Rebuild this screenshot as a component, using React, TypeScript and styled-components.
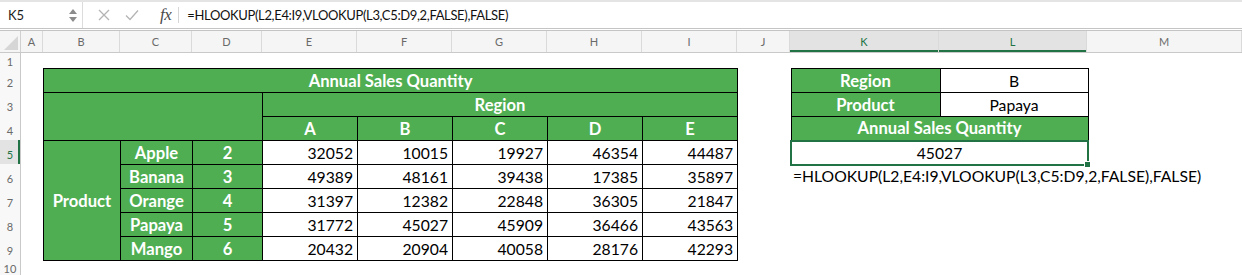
import React from "react";
import styled, { createGlobalStyle } from "styled-components";

const GREEN = "#4FAE52";
const SEL = "#217346";
const CELL_FONT = `"Lato", "Open Sans", sans-serif`;
const UI_FONT = `"Lato", "Liberation Sans", sans-serif`;

const Global = createGlobalStyle`
  html, body { margin: 0; padding: 0; background: #fff; overflow: hidden; }
  #root { width: 1242px; height: 275px; overflow: hidden; }
`;

const Page = styled.div`
  width: 1242px;
  height: 275px;
  display: flex;
  flex-direction: column;
  font-family: ${UI_FONT};
  background: #fff;
`;

/* ---------- formula bar ---------- */
const FormulaBar = styled.div`
  height: 26px;
  flex: 0 0 26px;
  border-top: 2px solid #e4e4e4;
  border-bottom: 3px double #c4c4c4;
  display: flex;
  align-items: center;
  background: #fff;
`;

const NameBox = styled.div`
  width: 83px;
  height: 100%;
  box-sizing: border-box;
  border-right: 1px solid #dcdcdc;
  display: flex;
  align-items: center;
  justify-content: space-between;
  padding: 0 5px 0 8px;
  font-size: 13px;
  color: #1d1d1d;
`;

const Spinner = styled.div`
  display: flex;
  flex-direction: column;
  gap: 3px;
`;

const IconButton = styled.div<{ $ml: number }>`
  margin-left: ${(p) => p.$ml}px;
  display: flex;
  align-items: center;
  justify-content: center;
  width: 14px;
  height: 14px;
`;

const Fx = styled.span`
  margin-left: 21px;
  font-family: "Liberation Serif", "DejaVu Serif", serif;
  font-style: italic;
  font-size: 17px;
  color: #4a4a4a;
  letter-spacing: -0.5px;
`;

const BarDivider = styled.div`
  width: 1px;
  height: 16px;
  background: #d6d6d6;
  margin-left: 7px;
`;

const FormulaText = styled.div`
  margin-left: 8px;
  font-size: 13px;
  letter-spacing: -0.35px;
  color: #111;
  white-space: nowrap;
`;

/* ---------- column headers ---------- */
const ColHeaderRow = styled.div`
  height: 21px;
  flex: 0 0 21px;
  display: flex;
  background: #f5f5f5;
  border-bottom: 1px solid #c9c9c9;
`;

const ColHeader = styled.div<{ $w: number; $active?: boolean }>`
  flex: ${(p) => (p.$w ? `0 0 ${p.$w}px` : "1 1 auto")};
  box-sizing: border-box;
  border-right: 1px solid #dadada;
  display: flex;
  align-items: center;
  justify-content: center;
  font-size: 11px;
  color: ${(p) => (p.$active ? SEL : "#6a6a6a")};
  background: ${(p) => (p.$active ? "#e3e3e3" : "transparent")};
  box-shadow: ${(p) => (p.$active ? `inset 0 -2px 0 ${SEL}` : "none")};
  position: relative;
`;

const Corner = styled.div`
  flex: 0 0 21px;
  box-sizing: border-box;
  border-right: 1px solid #d0d0d0;
  display: flex;
  align-items: flex-end;
  justify-content: flex-end;
  padding: 0 2px 2px 0;
`;

/* ---------- body ---------- */
const Body = styled.div`
  flex: 1;
  display: flex;
  min-height: 0;
`;

const RowHeaders = styled.div`
  flex: 0 0 21px;
  box-sizing: border-box;
  border-right: 1px solid #c9c9c9;
  background: #f8f8f8;
  display: flex;
  flex-direction: column;
`;

const RowHeader = styled.div<{ $h: number; $active?: boolean }>`
  flex: ${(p) => (p.$h ? `0 0 ${p.$h}px` : "1 1 auto")};
  display: flex;
  align-items: flex-end;
  justify-content: center;
  padding-bottom: ${(p) => (p.$h > 20 ? 3 : 0)}px;
  box-sizing: border-box;
  font-size: 11px;
  color: ${(p) => (p.$active ? SEL : "#6a6a6a")};
  background: ${(p) => (p.$active ? "#e3e3e3" : "transparent")};
  box-shadow: ${(p) => (p.$active ? `inset -2px 0 0 ${SEL}` : "none")};
`;

const Canvas = styled.div`
  flex: 1;
  display: grid;
  grid-template-columns: 22px 77px 72px 70px repeat(5, 95px) 53px 149px 148px 1fr;
  grid-template-rows: 15px repeat(8, 24px) 1fr;
`;

const TableArea = styled.div<{ $col: string; $row: string }>`
  grid-column: ${(p) => p.$col};
  grid-row: ${(p) => p.$row};
`;

const Table = styled.table`
  border-collapse: collapse;
  table-layout: fixed;
  width: 100%;
  height: 100%;
  font-family: ${CELL_FONT};
`;

const Tr = styled.tr`
  height: 24px;
`;

const Td = styled.td<{ $green?: boolean; $align?: string; $selected?: boolean }>`
  border: ${(p) => (p.$selected ? `2px solid ${SEL}` : "1px solid #000")};
  background: ${(p) => (p.$green ? GREEN : "#fff")};
  color: ${(p) => (p.$green ? "#fff" : "#000")};
  font-weight: ${(p) => (p.$green ? 700 : 400)};
  font-size: ${(p) => (p.$green ? "16.6px" : "15.7px")};
  text-align: ${(p) => p.$align || "center"};
  padding: 0 ${(p) => (p.$align === "right" ? 4 : 2)}px 0 2px;
  white-space: nowrap;
  overflow: visible;
  position: relative;
  line-height: 20px;
`;

const FillHandle = styled.span`
  position: absolute;
  right: -4px;
  bottom: -4px;
  width: 5px;
  height: 5px;
  background: ${SEL};
  border: 1px solid #fff;
`;

const Note = styled.div`
  grid-column: 11 / 14;
  grid-row: 6;
  padding-left: 3px;
  display: flex;
  align-items: center;
  font-family: ${CELL_FONT};
  font-size: 15.7px;
  color: #000;
  white-space: nowrap;
`;

const columns = [
  { id: "A", w: 22 },
  { id: "B", w: 77 },
  { id: "C", w: 72 },
  { id: "D", w: 70 },
  { id: "E", w: 95 },
  { id: "F", w: 95 },
  { id: "G", w: 95 },
  { id: "H", w: 95 },
  { id: "I", w: 95 },
  { id: "J", w: 53 },
  { id: "K", w: 149, active: true },
  { id: "L", w: 148, active: true },
  { id: "M", w: 0 },
];

const rows = [
  { n: 1, h: 15 },
  { n: 2, h: 24 },
  { n: 3, h: 24 },
  { n: 4, h: 24 },
  { n: 5, h: 24, active: true },
  { n: 6, h: 24 },
  { n: 7, h: 24 },
  { n: 8, h: 24 },
  { n: 9, h: 24 },
  { n: 10, h: 0 },
];

const data: [string, number, number[]][] = [
  ["Apple", 2, [32052, 10015, 19927, 46354, 44487]],
  ["Banana", 3, [49389, 48161, 39438, 17385, 35897]],
  ["Orange", 4, [31397, 12382, 22848, 36305, 21847]],
  ["Papaya", 5, [31772, 45027, 45909, 36466, 43563]],
  ["Mango", 6, [20432, 20904, 40058, 28176, 42293]],
];

const FORMULA = "=HLOOKUP(L2,E4:I9,VLOOKUP(L3,C5:D9,2,FALSE),FALSE)";

export default function App() {
  return (
    <Page>
      <Global />
      <FormulaBar>
        <NameBox>
          <span>K5</span>
          <Spinner>
            <svg width="8" height="5" viewBox="0 0 8 5">
              <polygon points="4,0 8,5 0,5" fill="#8c8c8c" />
            </svg>
            <svg width="8" height="5" viewBox="0 0 8 5">
              <polygon points="0,0 8,0 4,5" fill="#8c8c8c" />
            </svg>
          </Spinner>
        </NameBox>
        <IconButton $ml={14}>
          <svg width="12" height="12" viewBox="0 0 12 12">
            <path d="M1 1 L11 11 M11 1 L1 11" stroke="#b4b4b4" strokeWidth="1.3" fill="none" />
          </svg>
        </IconButton>
        <IconButton $ml={14}>
          <svg width="14" height="12" viewBox="0 0 14 12">
            <path d="M1 6.5 L5 10.5 L13 1.5" stroke="#b4b4b4" strokeWidth="1.3" fill="none" />
          </svg>
        </IconButton>
        <Fx>fx</Fx>
        <BarDivider />
        <FormulaText>{FORMULA}</FormulaText>
      </FormulaBar>

      <ColHeaderRow>
        <Corner>
          <svg width="14" height="14" viewBox="0 0 14 14">
            <polygon points="14,0 14,14 0,14" fill="#d6d6d6" />
          </svg>
        </Corner>
        {columns.map((c) => (
          <ColHeader key={c.id} $w={c.w} $active={c.active}>
            {c.id}
          </ColHeader>
        ))}
      </ColHeaderRow>

      <Body>
        <RowHeaders>
          {rows.map((r) => (
            <RowHeader key={r.n} $h={r.h} $active={r.active}>
              {r.n}
            </RowHeader>
          ))}
        </RowHeaders>
        <Canvas>
          <TableArea $col="2 / 10" $row="2 / 10">
            <Table>
              <colgroup>
                <col style={{ width: 77 }} />
                <col style={{ width: 72 }} />
                <col style={{ width: 70 }} />
                <col style={{ width: 95 }} />
                <col style={{ width: 95 }} />
                <col style={{ width: 95 }} />
                <col style={{ width: 95 }} />
                <col style={{ width: 95 }} />
              </colgroup>
              <tbody>
                <Tr>
                  <Td $green colSpan={8}>
                    Annual Sales Quantity
                  </Td>
                </Tr>
                <Tr>
                  <Td $green colSpan={3} rowSpan={2} />
                  <Td $green colSpan={5}>
                    Region
                  </Td>
                </Tr>
                <Tr>
                  {["A", "B", "C", "D", "E"].map((r) => (
                    <Td $green key={r}>
                      {r}
                    </Td>
                  ))}
                </Tr>
                {data.map(([name, idx, vals], i) => (
                  <Tr key={name}>
                    {i === 0 && (
                      <Td $green rowSpan={5}>
                        Product
                      </Td>
                    )}
                    <Td $green>{name}</Td>
                    <Td $green>{idx}</Td>
                    {vals.map((v, j) => (
                      <Td key={j} $align="right">
                        {v}
                      </Td>
                    ))}
                  </Tr>
                ))}
              </tbody>
            </Table>
          </TableArea>

          <TableArea $col="11 / 13" $row="2 / 6">
            <Table>
              <colgroup>
                <col style={{ width: 149 }} />
                <col style={{ width: 148 }} />
              </colgroup>
              <tbody>
                <Tr>
                  <Td $green>Region</Td>
                  <Td>B</Td>
                </Tr>
                <Tr>
                  <Td $green>Product</Td>
                  <Td>Papaya</Td>
                </Tr>
                <Tr>
                  <Td $green colSpan={2}>
                    Annual Sales Quantity
                  </Td>
                </Tr>
                <Tr>
                  <Td colSpan={2} $selected>
                    45027
                    <FillHandle />
                  </Td>
                </Tr>
              </tbody>
            </Table>
          </TableArea>

          <Note>{FORMULA}</Note>
        </Canvas>
      </Body>
    </Page>
  );
}
